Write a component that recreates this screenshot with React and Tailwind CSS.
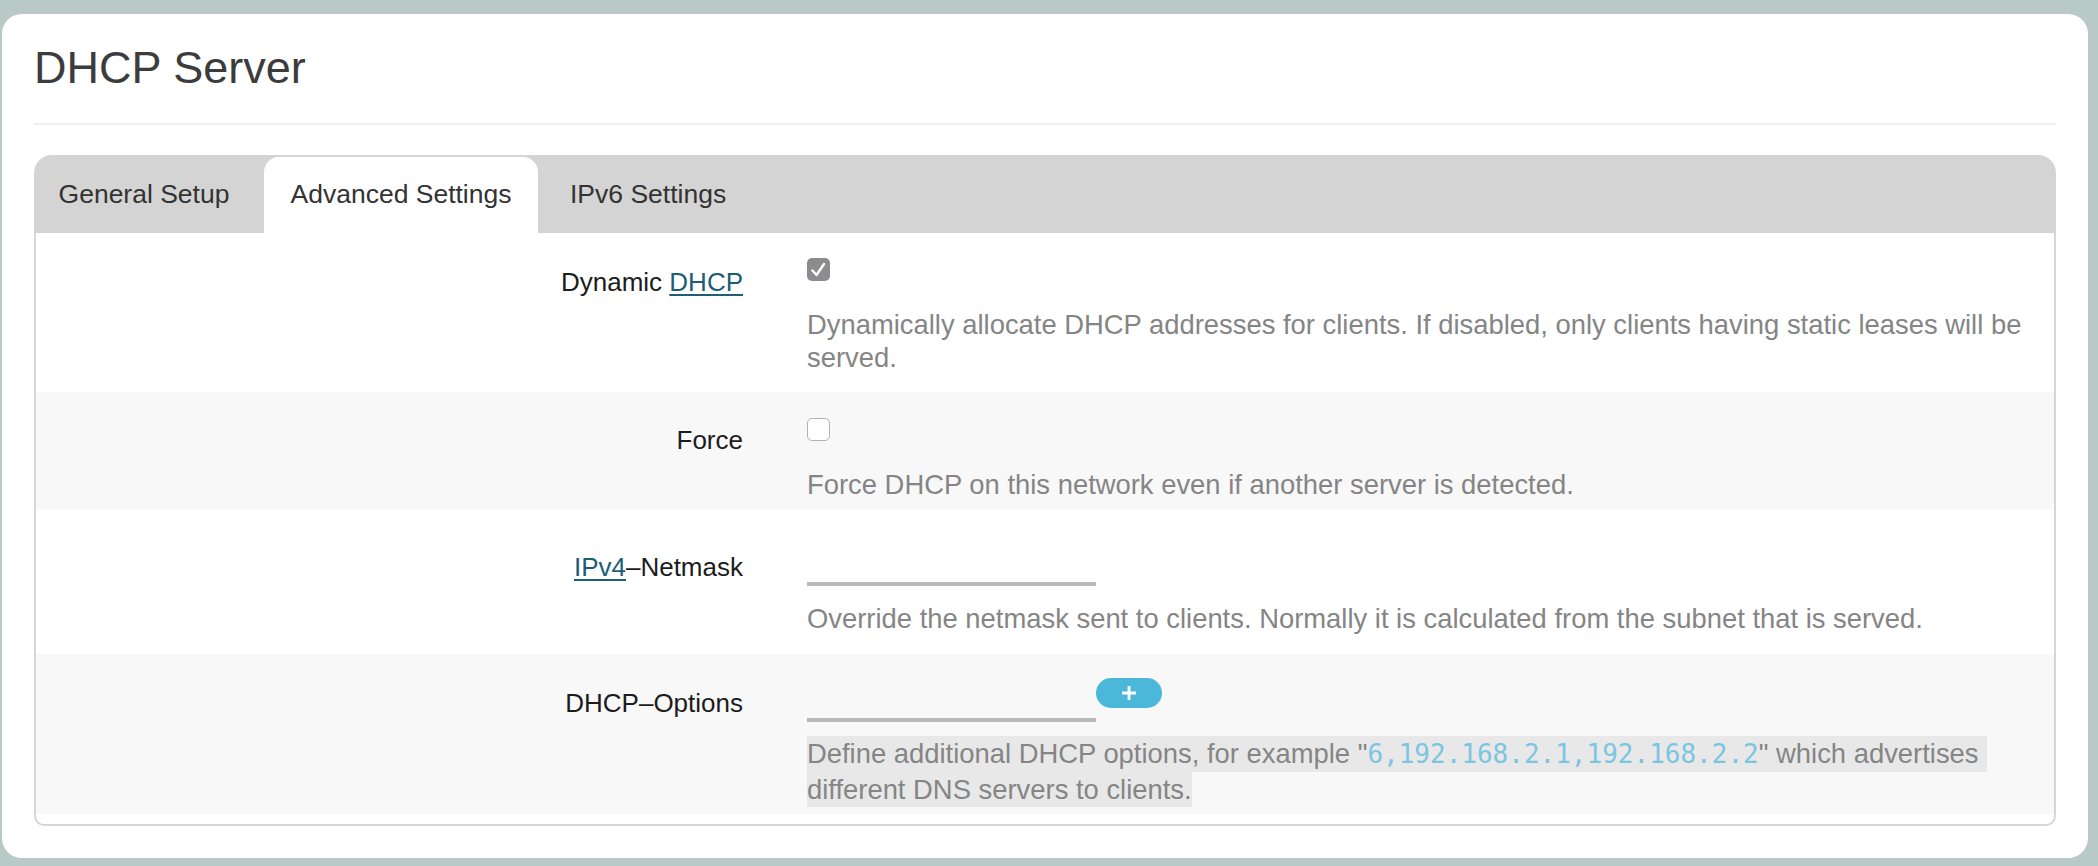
import React from "react";

const font = { fontFamily: '"Liberation Sans", Arial, sans-serif' };

function CheckedBox() {
  return (
    <svg width="23" height="23" viewBox="0 0 23 23" className="block">
      <rect x="0" y="0" width="23" height="23" rx="5" fill="#8c8c90" />
      <path d="M5.5 12.5 L9.5 17 L17 6" fill="none" stroke="#ffffff" strokeWidth="2.4" strokeLinecap="round" strokeLinejoin="round" />
    </svg>
  );
}

function EmptyBox() {
  return <div className="w-[23px] h-[23px] rounded-[5px] border-[1.5px] border-[#b3b3b3] bg-white" />;
}

function Label({ children, pt }) {
  return (
    <div className={`w-[707px] shrink-0 text-right text-[26px] leading-[34px] text-[#1c1c1c] ${pt}`}>{children}</div>
  );
}

function Link({ children }) {
  return <span className="text-[#1d5d78] underline decoration-[2px] underline-offset-[3px]">{children}</span>;
}

export default function App() {
  return (
    <div className="min-h-screen bg-[#b8c9c7] pt-[14px] pl-[2px] pr-[10px] pb-[9px]" style={font}>
      <div className="bg-white rounded-[20px] px-[32px] pt-[32px] pb-[32px]">
        <h2 className="text-[45px] leading-[44px] text-[#3c3c3c]">DHCP Server</h2>
        <div className="mt-[33px] h-[2px] bg-[#efefef]" />
        <div className="mt-[30px]">
          <div className="flex items-end h-[78px] bg-[#d4d4d4] rounded-t-[18px] text-[26.5px] text-[#333333]">
            <div className="w-[220px] h-[76px] flex items-center justify-center">General Setup</div>
            <div className="ml-[10px] w-[274px] h-[76px] flex items-center justify-center bg-white rounded-t-[15px]">Advanced Settings</div>
            <div className="ml-[10px] h-[76px] flex items-center px-[22px]">IPv6 Settings</div>
          </div>
          <div className="border-x-2 border-b-2 border-[#d6d6d6] rounded-b-[10px] pb-[10px]">
            {/* Row 1 */}
            <div className="flex bg-white">
              <Label pt="pt-[32px]">
                Dynamic <Link>DHCP</Link>
              </Label>
              <div className="ml-[64px] pt-[25px] pb-[18px]">
                <CheckedBox />
                <div className="mt-[27px] text-[27.4px] leading-[33px] text-[#858585] whitespace-nowrap">
                  Dynamically allocate DHCP addresses for clients. If disabled, only clients having static leases will be
                  <br />
                  served.
                </div>
              </div>
            </div>
            {/* Row 2 */}
            <div className="flex bg-[#f8f8f8]">
              <Label pt="pt-[31px]">Force</Label>
              <div className="ml-[64px] pt-[26px] pb-[8px]">
                <EmptyBox />
                <div className="mt-[27px] text-[27.4px] leading-[33px] text-[#858585] whitespace-nowrap">
                  Force DHCP on this network even if another server is detected.
                </div>
              </div>
            </div>
            {/* Row 3 */}
            <div className="flex bg-white">
              <Label pt="pt-[41px]">
                <Link>IPv4</Link>–Netmask
              </Label>
              <div className="ml-[64px] pt-[39px] pb-[19px]">
                <div className="w-[289px] h-[38px] border-b-4 border-[#bababa]" />
                <div className="mt-[16px] text-[27.4px] leading-[33px] text-[#858585] whitespace-nowrap">
                  Override the netmask sent to clients. Normally it is calculated from the subnet that is served.
                </div>
              </div>
            </div>
            {/* Row 4 */}
            <div className="flex bg-[#f8f8f8]">
              <Label pt="pt-[32px]">DHCP–Options</Label>
              <div className="ml-[64px] pt-[24px] pb-[7px]">
                <div className="flex items-start">
                  <div className="mt-[6px] w-[289px] h-[38px] border-b-4 border-[#bababa]" />
                  <button className="w-[66px] h-[30px] rounded-full bg-[#4bb7d9] flex items-center justify-center">
                    <svg width="16" height="16" viewBox="0 0 16 16">
                      <path d="M8 1 V15 M1 8 H15" stroke="#ffffff" strokeWidth="2.8" />
                    </svg>
                  </button>
                </div>
                <div className="mt-[14px] text-[27.4px] leading-[35px] text-[#858585] whitespace-nowrap">
                  <div className="w-fit bg-[#e8e8e8] pr-[8px]">
                    Define additional DHCP options, for example "
                    <span className="text-[26px] text-[#7cc5e0]" style={{ fontFamily: '"DejaVu Sans Mono", monospace' }}>
                      6,192.168.2.1,192.168.2.2
                    </span>
                    " which advertises
                  </div>
                  <div className="w-fit bg-[#e8e8e8]">different DNS servers to clients.</div>
                </div>
              </div>
            </div>
          </div>
        </div>
      </div>
    </div>
  );
}
